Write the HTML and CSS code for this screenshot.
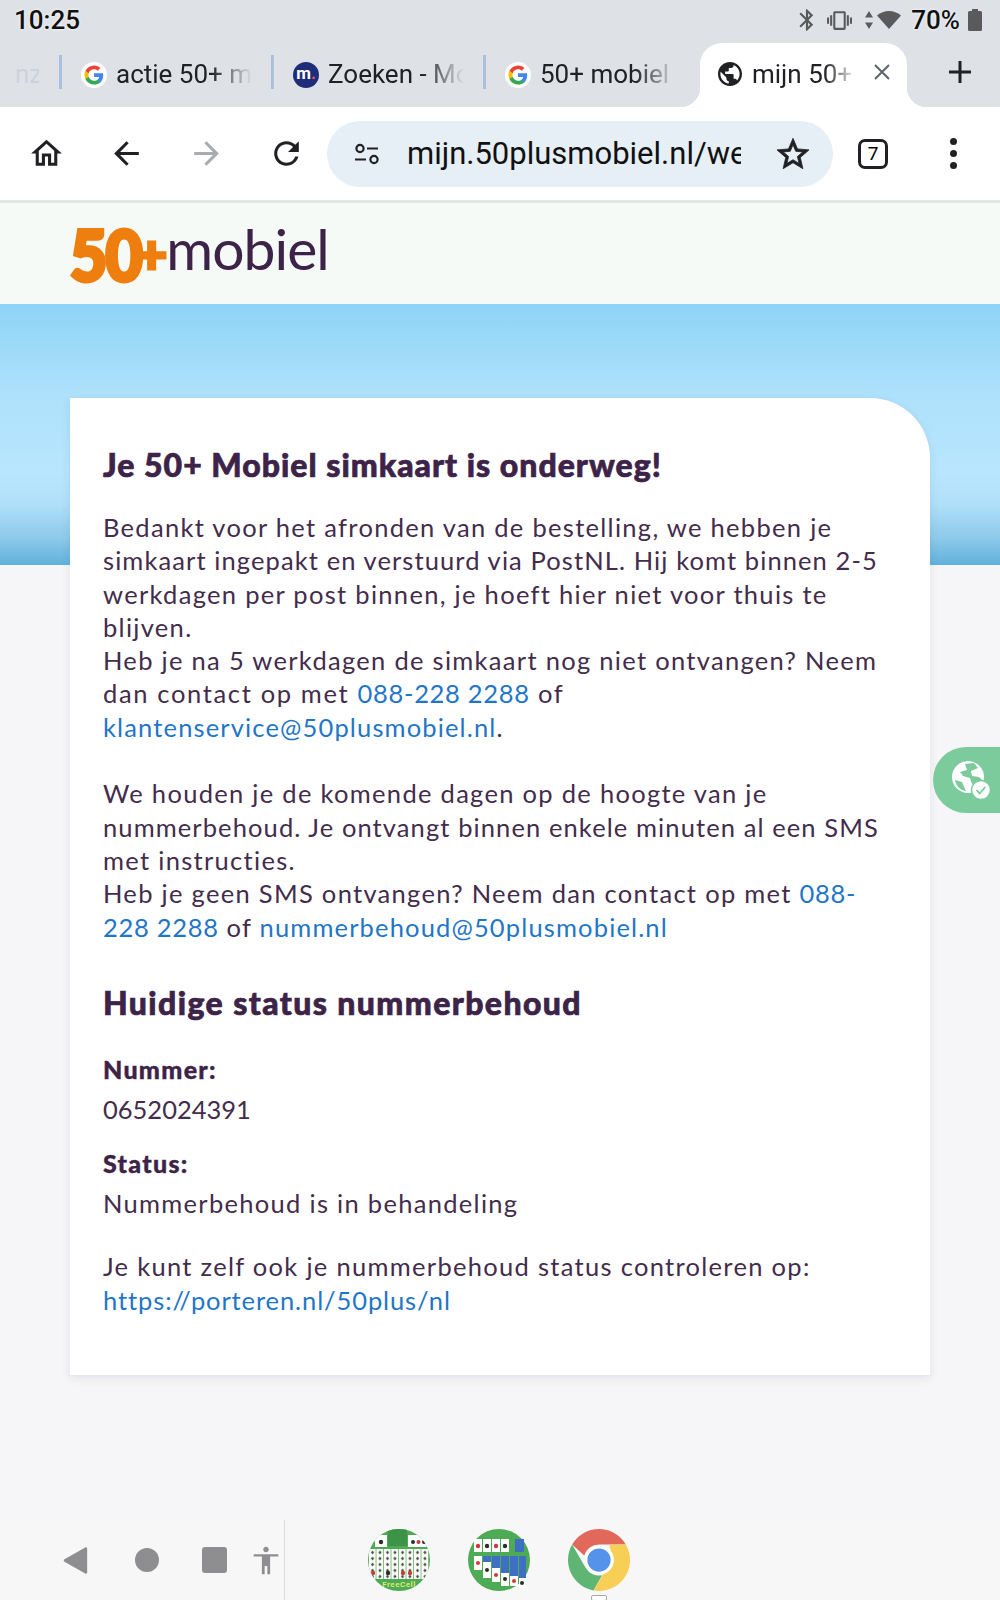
FILE: index.html
```html
<!DOCTYPE html>
<html lang="nl">
<head>
<meta charset="utf-8">
<title>mijn 50+</title>
<link rel="stylesheet" href="styles.css">
</head>
<body>
<div class="chrome">
  <div class="status">
    <span class="time">10:25</span>
    <div class="status-icons">
      <svg class="si si-bt" viewBox="0 0 24 24"><path d="M17.71 7.71L12 2h-1v7.59L6.41 5 5 6.41 10.59 12 5 17.59 6.41 19 11 14.41V22h1l5.71-5.71-4.3-4.29 4.3-4.29zM13 5.83l1.88 1.88L13 9.59V5.83zm1.88 10.46L13 18.17v-3.76l1.88 1.88z"/></svg>
      <svg class="si si-vib" viewBox="0 0 24 24"><path d="M0 15h2V9H0v6zm3 2h2V7H3v10zm19-8v6h2V9h-2zm-3 8h2V7h-2v10zM16.5 3h-9C6.67 3 6 3.67 6 4.5v15c0 .83.67 1.5 1.5 1.5h9c.83 0 1.5-.67 1.5-1.5v-15c0-.83-.67-1.5-1.5-1.5zM16 19H8V5h8v14z"/></svg>
      <svg class="si si-arrows" viewBox="0 0 8 18"><path d="M4 0l4 6.5H0zM4 18l-4-6.5h8z"/></svg>
      <svg class="si si-wifi" viewBox="0 0 24 18"><path d="M12 18L24 4.5C20.5 1.5 16.5 0 12 0S3.500 1.500 0 4.500z"/></svg>
      <span class="pct">70%</span>
      <svg class="si si-bat" viewBox="0 0 14 22"><path d="M4 0h6v2h2.500A1.500 1.500 0 0 1 14 3.500v17a1.500 1.500 0 0 1-1.500 1.500h-11A1.500 1.500 0 0 1 0 20.500v-17A1.500 1.500 0 0 1 1.500 2H4z"/></svg>
    </div>
  </div>
  <div class="tabs">
    <div class="tab tab-cut"><span class="tab-text">nz</span></div>
    <div class="tab">
      <svg class="fav" viewBox="0 0 26 26"><circle cx="13" cy="13" r="13" fill="#fff"/><g transform="translate(2.600 2.600) scale(.87)"><path fill="#4285f4" d="M22.560 12.250c0-.78-.07-1.530-.2-2.250H12v4.260h5.920c-.26 1.370-1.040 2.530-2.210 3.310v2.770h3.570c2.080-1.920 3.280-4.740 3.280-8.090z"/><path fill="#34a853" d="M12 23c2.970 0 5.460-.98 7.280-2.660l-3.570-2.770c-.98.66-2.230 1.060-3.710 1.060-2.860 0-5.290-1.930-6.160-4.530H2.180v2.840C3.990 20.530 7.700 23 12 23z"/><path fill="#fbbc05" d="M5.840 14.090c-.22-.66-.35-1.360-.35-2.090s.13-1.430.35-2.090V7.070H2.180C1.430 8.550 1 10.220 1 12s.43 3.450 1.180 4.930l3.660-2.840z"/><path fill="#ea4335" d="M12 5.380c1.620 0 3.060.56 4.210 1.640l3.150-3.150C17.450 2.090 14.970 1 12 1 7.700 1 3.990 3.470 2.180 7.070l3.660 2.840c.87-2.600 3.300-4.530 6.160-4.530z"/></g></svg>
      <span class="tab-text">actie 50+ m</span>
    </div>
    <div class="tab">
      <span class="fav fav-m">m<i class="fav-dot">.</i></span>
      <span class="tab-text">Zoeken - Mobiel</span>
    </div>
    <div class="tab tab-last">
      <svg class="fav" viewBox="0 0 26 26"><circle cx="13" cy="13" r="13" fill="#fff"/><g transform="translate(2.600 2.600) scale(.87)"><path fill="#4285f4" d="M22.560 12.250c0-.78-.07-1.530-.2-2.250H12v4.260h5.920c-.26 1.370-1.040 2.530-2.210 3.310v2.770h3.570c2.080-1.920 3.280-4.740 3.280-8.090z"/><path fill="#34a853" d="M12 23c2.970 0 5.460-.98 7.280-2.660l-3.570-2.770c-.98.66-2.230 1.060-3.710 1.060-2.860 0-5.290-1.930-6.160-4.530H2.180v2.840C3.990 20.530 7.700 23 12 23z"/><path fill="#fbbc05" d="M5.840 14.090c-.22-.66-.35-1.360-.35-2.090s.13-1.430.35-2.090V7.070H2.180C1.430 8.550 1 10.220 1 12s.43 3.450 1.180 4.930l3.660-2.840z"/><path fill="#ea4335" d="M12 5.380c1.620 0 3.060.56 4.210 1.640l3.150-3.150C17.450 2.090 14.970 1 12 1 7.700 1 3.990 3.470 2.180 7.070l3.660 2.840c.87-2.600 3.300-4.530 6.160-4.530z"/></g></svg>
      <span class="tab-text">50+ mobiel</span>
    </div>
    <div class="tab-active">
      <svg class="fav-globe" viewBox="2 2 20 20"><path fill="#202124" d="M12 2C6.480 2 2 6.480 2 12s4.480 10 10 10 10-4.480 10-10S17.520 2 12 2zm-1 17.930c-3.950-.49-7-3.850-7-7.930 0-.62.08-1.210.21-1.790L9 15v1c0 1.100.9 2 2 2v1.930zm6.900-2.540c-.26-.81-1-1.390-1.900-1.390h-1v-3c0-.55-.45-1-1-1H8v-2h2c.55 0 1-.45 1-1V7h2c1.100 0 2-.9 2-2v-.41c2.930 1.190 5 4.060 5 7.410 0 2.080-.8 3.970-2.100 5.390z"/></svg>
      <span class="tab-text tab-text-active">mijn 50+ mob</span>
      <svg class="tab-close" viewBox="0 0 18 18"><path d="M2 2l14 14M16 2L2 16" stroke="#5f6368" stroke-width="2" fill="none"/></svg>
    </div>
    <svg class="tab-plus" viewBox="0 0 24 24"><path d="M12 1v22M1 12h22" stroke="#202124" stroke-width="3" fill="none"/></svg>
  </div>
</div>

<div class="toolbar">
  <div class="tool"><svg class="ic" viewBox="0 0 24 24"><path d="M12 5.690l5 4.500V18h-2v-6H9v6H7v-7.810l5-4.500M12 3L2 12h3v8h6v-6h2v6h6v-8h3L12 3z"/></svg></div>
  <div class="tool"><svg class="ic" viewBox="0 0 24 24"><path d="M20 11H7.830l5.590-5.590L12 4l-8 8 8 8 1.410-1.410L7.830 13H20v-2z"/></svg></div>
  <div class="tool"><svg class="ic ic-off" viewBox="0 0 24 24"><path d="M12 4l-1.410 1.410L16.170 11H4v2h12.170l-5.580 5.590L12 20l8-8z"/></svg></div>
  <div class="tool"><svg class="ic" viewBox="0 0 24 24"><path d="M17.650 6.350A7.958 7.958 0 0 0 12 4c-4.420 0-7.990 3.580-7.990 8s3.570 8 7.990 8c3.730 0 6.840-2.550 7.730-6h-2.080A5.990 5.990 0 0 1 12 18c-3.310 0-6-2.690-6-6s2.690-6 6-6c1.660 0 3.140.69 4.220 1.780L13 11h7V4l-2.350 2.350z"/></svg></div>
  <div class="omnibox">
    <svg class="tune" viewBox="0 0 26 22" fill="none" stroke="#202124" stroke-width="2.200"><circle cx="6" cy="5.500" r="3.600"/><path d="M13 5.500h11M1 16.500h11"/><circle cx="20" cy="16.500" r="3.600"/></svg>
    <span class="url">mijn.50plusmobiel.nl/webshop</span>
    <svg class="star" viewBox="2 2 20 19"><path d="M22 9.240l-7.190-.62L12 2 9.190 8.630 2 9.240l5.460 4.730L5.820 21 12 17.270 18.180 21l-1.630-7.030L22 9.240zM12 15.400l-3.760 2.270 1-4.280-3.320-2.880 4.380-.38L12 6.100l1.710 4.040 4.380.38-3.320 2.880 1 4.280L12 15.400z"/></svg>
  </div>
  <div class="tool"><span class="tab-count">7</span></div>
  <div class="tool"><span class="dots"><i></i><i></i><i></i></span></div>
</div>

<header class="site-header">
  <div class="logo"><span class="logo-num">50</span><span class="logo-plus">+</span><span class="logo-word">mobiel</span></div>
</header>

<main class="hero">
  <section class="card">
    <h1>Je 50+ Mobiel simkaart is onderweg!</h1>
    <p>Bedankt voor het afronden van de bestelling, we hebben je<br>
    <span class="tight">simkaart ingepakt en verstuurd via PostNL. Hij komt binnen 2-5</span><br>
    werkdagen per post binnen, je hoeft hier niet voor thuis te<br>
    blijven.<br>
    Heb je na 5 werkdagen de simkaart nog niet ontvangen? Neem<br>
    <span class="loose">dan contact op met </span><a class="tel" href="#">088-228 2288</a><span class="loose"> of</span><br>
    <a class="mail" href="#">klantenservice@50plusmobiel.nl</a>.</p>
    <p class="gap">We houden je de komende dagen op de hoogte van je<br>
    <span class="tight">nummerbehoud. Je ontvangt binnen enkele minuten al een SMS</span><br>
    met instructies.<br>
    Heb je geen SMS ontvangen? Neem dan contact op met <a class="tel" href="#">088-<br>
    228 2288</a> of <a class="mail" href="#">nummerbehoud@50plusmobiel.nl</a></p>
    <h2>Huidige status nummerbehoud</h2>
    <h3>Nummer:</h3>
    <p class="value digits">0652024391</p>
    <h3 class="status-label">Status:</h3>
    <p class="value">Nummerbehoud is in behandeling</p>
    <p class="check">Je kunt zelf ook je nummerbehoud status controleren op:<br>
    <a class="url-link" href="#">https://porteren.nl/50plus/nl</a></p>
  </section>
  <div class="float-btn">
    <svg class="float-ic" viewBox="0 0 46 46">
      <circle cx="20" cy="20" r="16" fill="#fff"/>
      <path d="M17 7l9-1 4 5-7 3 1 5 7 1 4 4-5 6-6-3-2-6-7-2-3-4 7-2z" fill="#7ccb9c"/>
      <path d="M7 23l7 2 4 9c-6-1-10-5-11-11z" fill="#7ccb9c"/>
      <circle cx="33" cy="33" r="9.500" fill="#fff" stroke="#7ccb9c" stroke-width="1.500"/>
      <path d="M28.500 33l3.200 3.500 5.500-6.500" fill="none" stroke="#7ccb9c" stroke-width="1.800"/>
    </svg>
  </div>
</main>

<nav class="sysnav">
  <svg class="nav-i nav-back" viewBox="0 0 24 26"><path d="M22 1.500L2 13l20 11.500z" fill="#8e8e90" stroke="#8e8e90" stroke-width="2.500" stroke-linejoin="round"/></svg>
  <span class="nav-i nav-home"></span>
  <span class="nav-i nav-recent"></span>
  <svg class="nav-i nav-a11y" viewBox="2.500 1.500 19 21"><path fill="#8e8e90" d="M12 2c1.100 0 2 .9 2 2s-.9 2-2 2-2-.9-2-2 .9-2 2-2zm9 5.500V9h-6v13h-2v-6h-2v6H9V9H3V7.500z"/></svg>
  <span class="nav-divider"></span>
  <svg class="app" viewBox="0 0 62 62">
    <defs>
      <clipPath id="fc-clip"><circle cx="31" cy="31" r="31"/></clipPath>
      <pattern id="fc-cards" width="7.500" height="6" patternUnits="userSpaceOnUse" x="1" y="20">
        <rect width="6.800" height="6" fill="#fbfbf7"/>
        <path d="M2 3.500l1.500-2 1.500 2-1.500 2z" fill="#4a4a48"/>
      </pattern>
    </defs>
    <circle cx="31" cy="31" r="31" fill="#4dab55"/>
    <g clip-path="url(#fc-clip)">
      <rect x="20" y="0" width="19" height="17" fill="#3d9347"/>
      <rect x="7" y="6" width="12" height="12" fill="#fff"/>
      <rect x="40" y="6" width="21" height="12" fill="#fff"/>
      <circle cx="13" cy="13" r="2.200" fill="#2d2d2d"/>
      <circle cx="45" cy="13" r="2" fill="#2d2d2d"/><circle cx="50.500" cy="13" r="2" fill="#d0393a"/><circle cx="56" cy="13" r="2" fill="#2d2d2d"/>
      <rect x="1" y="20" width="60" height="30" fill="url(#fc-cards)"/>
      <circle cx="5" cy="44" r="2.200" fill="#d0393a"/><circle cx="20" cy="44" r="2.200" fill="#2d2d2d"/><circle cx="35" cy="44" r="2.200" fill="#d0393a"/><circle cx="42" cy="44" r="2.200" fill="#d0393a"/>
    </g>
    <text class="freecell" x="31" y="58" text-anchor="middle">FreeCell</text>
  </svg>
  <svg class="app" viewBox="0 0 62 62">
    <circle cx="31" cy="31" r="31" fill="#4dab55"/>
    <g fill="#fff"><rect x="6" y="10" width="8" height="13"/><rect x="15" y="10" width="8" height="13"/><rect x="24" y="10" width="8" height="13"/><rect x="33" y="10" width="8" height="13"/></g>
    <rect x="47" y="10" width="9" height="13" fill="#3f6fc2"/>
    <g fill="#2d2d2d"><circle cx="19" cy="17" r="2.200"/><circle cx="37" cy="17" r="2.200"/></g>
    <g fill="#d0393a"><circle cx="10" cy="17" r="2.200"/><circle cx="28" cy="17" r="2.200"/></g>
    <g fill="#fff"><rect x="6" y="27" width="8" height="14"/><rect x="15" y="27" width="8" height="22"/><rect x="24" y="27" width="8" height="26"/><rect x="33" y="27" width="8" height="30"/><rect x="42" y="27" width="8" height="30"/><rect x="51" y="27" width="7" height="32"/></g>
    <g fill="#3f6fc2"><rect x="15" y="27" width="8" height="6"/><rect x="24" y="27" width="8" height="12"/><rect x="33" y="27" width="8" height="17"/><rect x="42" y="27" width="8" height="20"/><rect x="51" y="27" width="7" height="22"/></g>
    <g fill="#2d2d2d"><circle cx="19" cy="41" r="2"/><circle cx="37" cy="50" r="2"/><circle cx="54" cy="54" r="2"/></g>
    <g fill="#d0393a"><circle cx="10" cy="34" r="2"/><circle cx="28" cy="46" r="2"/><circle cx="46" cy="52" r="2"/></g>
  </svg>
  <div class="app-wrap">
    <svg class="app" viewBox="0 0 48 48">
      <path fill="#e0695c" d="M24 0a24 24 0 0 1 20.800 12H24a12 12 0 0 0-11.500 8.600L3.200 12A24 24 0 0 1 24 0z"/>
      <path fill="#5fb573" d="M3.200 12l10.400 18a12 12 0 0 0 12.800 5.800L19.800 47.600A24 24 0 0 1 3.200 12z"/>
      <path fill="#f8cf56" d="M44.800 12A24 24 0 0 1 24 48l-4.200-.4 10.600-18A12 12 0 0 0 33 16.500L32 12z"/>
      <circle cx="24" cy="24" r="11.500" fill="#fff"/>
      <circle cx="24" cy="24" r="9" fill="#5592ea"/>
    </svg>
    <span class="app-tag"></span>
  </div>
</nav>
</body>
</html>
```
FILE: styles.css
```css
* { box-sizing: border-box; }
html, body { margin: 0; padding: 0; }
body {
  width: 1000px;
  height: 1600px;
  overflow: hidden;
  display: flex;
  flex-direction: column;
  font-family: "Lato", "Liberation Sans", sans-serif;
  background: #f6f6f8;
}

/* Browser chrome */
.chrome { background: #dee2e7; height: 107px; font-family: "Roboto", sans-serif; color: #202124; }
.status { height: 43px; display: flex; align-items: center; justify-content: space-between; padding: 0 18px 3px 14px; }
.time { font-size: 26px; font-weight: 500; text-shadow: 0 0 3px #fff; color: #111; }
.status-icons { display: flex; align-items: center; }
.si { fill: #5a5a5c; display: block; }
.si-bt { width: 26px; height: 26px; margin-right: 7px; }
.si-vib { width: 25px; height: 25px; margin-right: 13px; }
.si-arrows { width: 8px; height: 18px; margin-right: 4px; }
.si-wifi { width: 24px; height: 18px; margin-right: 10px; }
.pct { font-size: 26px; font-weight: 500; color: #111; text-shadow: 0 0 3px #fff; margin-right: 8px; }
.si-bat { width: 14px; height: 22px; }

.tabs { height: 64px; display: flex; align-items: stretch; }
.tab {
  width: 212px;
  height: 34px;
  margin-top: 12px;
  display: flex;
  align-items: center;
  gap: 9px;
  padding: 5px 0 0 19px;
  border-right: 3px solid #a9c1dc;
}
.tab-cut { width: 62px; padding-left: 15px; }
.tab-cut .tab-text { width: 24px; color: #cdd2d9; -webkit-mask-image: none; mask-image: none; }
.tab-last { width: 214px; border-right: 0; }
.fav { width: 26px; height: 26px; flex: none; }
.fav-m {
  display: flex; align-items: center; justify-content: center;
  border-radius: 50%; background: #1f2d78; color: #fff;
  font: 700 17px/1 "Roboto", sans-serif; padding-bottom: 3px;
}
.fav-dot { color: #e0566b; font-style: normal; }
.tab-text {
  width: 136px;
  overflow: hidden;
  white-space: nowrap;
  font-size: 26px;
  line-height: 33px;
  -webkit-mask-image: linear-gradient(to right, #000 70%, transparent 100%);
  mask-image: linear-gradient(to right, #000 70%, transparent 100%);
}
.tab-active {
  position: relative;
  width: 207px;
  background: #fff;
  border-radius: 22px 22px 0 0;
  display: flex;
  align-items: center;
  padding: 0 0 2px 18px;
}
.tab-active::before, .tab-active::after {
  content: "";
  position: absolute;
  bottom: 0;
  width: 20px;
  height: 20px;
}
.tab-active::before { left: -20px; background: radial-gradient(circle at 0 0, transparent 20px, #fff 20.500px); }
.tab-active::after { right: -20px; background: radial-gradient(circle at 100% 0, transparent 20px, #fff 20.500px); }
.fav-globe { width: 24px; height: 24px; flex: none; margin-right: 10px; }
.tab-text-active { width: 104px; }
.tab-close { width: 18px; height: 18px; margin: 0 0 4px 17px; }
.tab-plus { width: 24px; height: 24px; margin: 17px 0 0 41px; }

/* Toolbar */
.toolbar {
  height: 96px;
  background: #fff;
  border-bottom: 3px solid #e4e6e6;
  display: flex;
  align-items: center;
  padding: 0 0 0 6px;
  font-family: "Roboto", sans-serif;
}
.tool { width: 80px; height: 66px; display: flex; align-items: center; justify-content: center; flex: none; }
.ic { width: 37px; height: 37px; fill: #202124; }
.ic-off { fill: #a9abae; }
.omnibox {
  width: 506px;
  height: 66px;
  margin-left: 1px;
  border-radius: 33px;
  background: #e6eef6;
  display: flex;
  align-items: center;
  padding-left: 27px;
  flex: none;
}
.tune { width: 26px; height: 22px; flex: none; margin-right: 27px; }
.url { width: 334px; overflow: hidden; white-space: nowrap; font-size: 31px; color: #111; flex: none; }
.star { width: 32px; height: 31px; margin-left: 36px; fill: #202124; stroke: #202124; stroke-width: .5; flex: none; }
.tab-count {
  width: 30px; height: 30px;
  border: 3px solid #202124;
  border-radius: 7px;
  display: flex; align-items: center; justify-content: center;
  font-size: 19px;
}
.dots { display: flex; flex-direction: column; gap: 5px; }
.dots i { display: block; width: 7px; height: 7px; border-radius: 50%; background: #202124; }

/* Site */
.site-header { height: 101px; background: #f5faf7; padding: 22px 0 0 70px; }
.logo { display: flex; align-items: flex-start; height: 62px; }
.logo-num {
  display: inline-block;
  font-weight: 900;
  font-size: 70px;
  line-height: 58px;
  letter-spacing: -2px;
  color: #ee7f0e;
  -webkit-text-stroke: 4px #ee7f0e;
  width: 67px;
  transform: scaleX(.92);
  transform-origin: left center;
}
.logo-plus {
  font-weight: 900;
  font-size: 54px;
  line-height: 60px;
  color: #ee7f0e;
  margin: -2px 0 0 -1px;
  -webkit-text-stroke: 3px #ee7f0e;
}
.logo-word {
  font-weight: 400;
  font-size: 57px;
  line-height: 46px;
  letter-spacing: -1px;
  color: #3d2348;
  margin-left: -1px;
}

.hero {
  position: relative;
  flex: 1;
  padding: 94px 70px 0;
  background: linear-gradient(to bottom, #8ed3f6 0, #9ad9f8 35px, #aee1fb 90px, #b8e6fe 170px, #b0e0f9 200px, #8cc9ea 235px, #5fb1dc 261px) no-repeat;
  background-size: 100% 261px;
  background-color: #f6f6f8;
}
.card {
  width: 860px;
  height: 977px;
  background: #fff;
  border-radius: 0 60px 0 0;
  box-shadow: 0 3px 10px rgba(70, 70, 140, .12);
  padding: 47px 33px 0;
  color: #432c4c;
  font-size: 25.500px;
  line-height: 33.300px;
  letter-spacing: 1.300px;
}
.card h1, .card h2 {
  margin: 0;
  font-weight: 900;
  font-size: 32px;
  line-height: 40px;
  letter-spacing: 1px;
  color: #3d2348;
  -webkit-text-stroke: .7px #3d2348;
}
.card h2 { letter-spacing: 1.400px; }
.card h3 {
  margin: 0;
  font-weight: 900;
  font-size: 25px;
  line-height: 33px;
  letter-spacing: 1.300px;
  color: #3d2348;
  -webkit-text-stroke: .4px #3d2348;
}
.card p { margin: 0; white-space: nowrap; }
.card h1 + p { margin-top: 26px; }
.card a { color: #1f76c9; text-decoration: none; }
.card a.tel { letter-spacing: .7px; }
.card a.mail { letter-spacing: 1.150px; }
.card a.url-link { letter-spacing: .9px; }
.tight { letter-spacing: 1.100px; }
.loose { letter-spacing: 1.650px; }
.digits { letter-spacing: 0; }
.gap { margin-top: 33.300px !important; }
.card h2 { margin-top: 39px; }
.card h2 + h3 { margin-top: 30px; }
.value { margin-top: 7.500px !important; }
.status-label { margin-top: 20px !important; }
.check { margin-top: 30px !important; }

.float-btn {
  position: absolute;
  top: 443px;
  right: 0;
  width: 67px;
  height: 66px;
  background: #7ccb9c;
  border-radius: 33px 0 0 33px;
  display: flex;
  align-items: center;
  padding-left: 15px;
}
.float-ic { width: 46px; height: 46px; }

/* System navigation */
.sysnav { height: 80px; background: #f7f7f7; display: flex; align-items: center; padding-left: 63px; flex: none; }
.nav-i { display: block; flex: none; }
.nav-back { width: 25px; height: 27px; margin-right: 47px; }
.nav-home { width: 24px; height: 24px; border-radius: 50%; background: #8e8e90; margin-right: 43px; }
.nav-recent { width: 25px; height: 26px; border-radius: 3px; background: #8e8e90; margin-right: 26px; }
.nav-a11y { width: 26px; height: 29px; }
.nav-divider { width: 1px; height: 80px; background: #dcdcdc; margin: 0 83px 0 5px; flex: none; }
.app { width: 62px; height: 62px; display: block; margin-right: 38px; flex: none; }
.app-wrap { position: relative; }
.app-wrap .app { margin-right: 0; }
.app-tag {
  position: absolute;
  left: 23px;
  top: 66px;
  width: 16px;
  height: 6px;
  border: 1px solid #a8a8a8;
  border-radius: 2px;
  background: #fff;
}
.freecell { font: 700 8px "Roboto", sans-serif; fill: #d8e86a; letter-spacing: .5px; }
```
